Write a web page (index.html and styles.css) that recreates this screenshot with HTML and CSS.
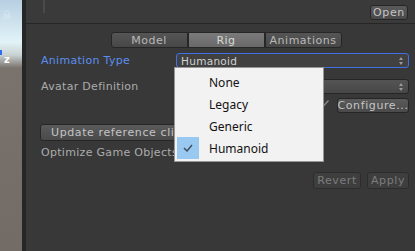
FILE: index.html
```html
<!DOCTYPE html>
<html lang="en">
  <head>
    <meta charset="utf-8">
    <meta name="viewport" content="width=device-width">
    <link rel="stylesheet" href="styles.css">
  </head>
  <body>
    <div class="app">
      <div class="scene">
        <svg class="lock" width="8" height="9" viewBox="0 0 8 9"><path d="M2 4V2.5a2 2 0 0 1 4 0V4" fill="none" stroke="#d6e6f0" stroke-width="1.2"/><rect x="0.5" y="4" width="7" height="5" fill="#d6e6f0"/></svg>
        <span class="gizmo"></span>
        <span class="axis">z</span>
      </div>
      <div class="split"></div>
      <div class="inspector">
        <div class="header">
          <span class="icon"></span>
          <span class="btn open">Open</span>
        </div>
        <div class="content">
          <div class="tabs">
            <span class="tab">Model</span>
            <span class="tab on">Rig</span>
            <span class="tab">Animations</span>
          </div>
          <div class="row first">
            <span class="label focus">Animation Type</span>
            <div class="field focus">Humanoid<span class="arrows"></span></div>
          </div>
          <div class="row">
            <span class="label">Avatar Definition</span>
            <div class="field"><span class="arrows"></span></div>
          </div>
          <div class="row end">
            <svg class="tick" width="8" height="7" viewBox="0 0 8 7"><path d="M0.5 4L2.5 6L7.5 0.5" fill="none" stroke="#8a8a8a" stroke-width="1.3"/></svg>
            <span class="btn configure">Configure...</span>
          </div>
          <span class="btn update">Update reference clips</span>
          <div class="row opt">
            <span class="label">Optimize Game Objects</span>
          </div>
          <div class="row end last">
            <span class="btn off">Revert</span>
            <span class="btn off">Apply</span>
          </div>
        </div>
        <ul class="menu">
          <li>None</li>
          <li>Legacy</li>
          <li>Generic</li>
          <li class="checked"><span class="mark"><svg width="10" height="8" viewBox="0 0 10 8"><path d="M1 4L4 7L9 1" fill="none" stroke="#3f4a57" stroke-width="1.4"/></svg></span>Humanoid</li>
        </ul>
      </div>
    </div>
  </body>
</html>
```

FILE: styles.css
```css
* {margin: 0; padding: 0;}
body {
	background: #383838;
	font: 11px "DejaVu Sans", Verdana, sans-serif;
	color: #acacac;
	overflow: hidden;
}
.app {display: flex; height: 251px;}

/* scene view strip */
.scene {
	width: 22px;
	position: relative;
	background: linear-gradient(#b7cfe2 0px, #e2f3f7 42px, #c9d2d2 55px, #7a736d 68px, #736b66 251px);
}
.lock {position: absolute; left: 3px; top: 10px; opacity: 0.7;}
.gizmo {position: absolute; left: 0; top: 50px; width: 2px; height: 5px; background: #2f6df2;}
.axis {position: absolute; left: 4px; top: 54px; color: #fff; font-weight: bold; font-size: 10px;}
.split {width: 4px; background: #262626;}

.inspector {flex: 1; position: relative; background: #383838;}
.header {
	height: 23px;
	border-bottom: 1px solid #262626;
	background: #3a3a3a;
	display: flex;
	justify-content: flex-end;
	align-items: flex-start;
	padding-right: 7px;
	position: relative;
}
.icon {position: absolute; left: 17px; top: 0; width: 2px; height: 13px; background: #4a4a4a;}

.btn {
	display: inline-flex;
	align-items: center;
	justify-content: center;
	height: 15px;
	border: 1px solid #262626;
	border-radius: 3px;
	background: linear-gradient(#5a5a5a, #4a4a4a);
	color: #c4c4c4;
	letter-spacing: 0.6px;
	box-sizing: border-box;
	white-space: nowrap;
}
.open {margin-top: 5px; width: 38px; height: 15px;}

.content {padding: 8px 6px 0 15px;}
.tabs {display: flex; justify-content: center; margin-left: 2px;}
.tab {
	width: 77px;
	height: 16px;
	box-sizing: border-box;
	display: flex;
	align-items: center;
	justify-content: center;
	border: 1px solid #262626;
	background: linear-gradient(#555, #474747);
	color: #b8b8b8;
	letter-spacing: 0.5px;
}
.tab:first-child {border-radius: 3px 0 0 3px;}
.tab:last-child {border-radius: 0 3px 3px 0;}
.tab.on {background: linear-gradient(#7a7a7a, #696969); color: #d8d8d8;}

.row {display: flex; align-items: center; height: 15px; margin-top: 11px;}
.row.first {margin-top: 5px;}
.label {width: 135px; letter-spacing: 0.3px; white-space: nowrap;}
.label.focus {color: #5c8ef0;}
.field {
	flex: 1;
	height: 15px;
	box-sizing: border-box;
	border: 1px solid #262626;
	border-radius: 3px;
	background: linear-gradient(#545454, #474747);
	color: #d2d2d2;
	padding-left: 4px;
	display: flex;
	align-items: center;
	position: relative;
	font-size: 10.5px;
	letter-spacing: 0.3px;
}
.field.focus {border-color: #3f70e6; background: #414141;}
.arrows {
	position: absolute;
	right: 5px; top: 3px;
	width: 0; height: 0;
	border-left: 2px solid transparent;
	border-right: 2px solid transparent;
	border-bottom: 3px solid #9a9a9a;
}
.arrows::after {
	content: "";
	position: absolute;
	left: -2px; top: 5px;
	border-left: 2px solid transparent;
	border-right: 2px solid transparent;
	border-top: 3px solid #9a9a9a;
}
.row.end {justify-content: flex-end; margin-top: 4px;}
.tick {margin-right: 8px; margin-bottom: 4px;}
.configure {width: 72px; height: 15px;}
.update {margin-top: 11px; width: 170px; height: 17px; justify-content: flex-start; padding-left: 10px; margin-left: -1px;}
.row.opt {margin-top: 4px;}
.row.end.last {margin-top: 12px; gap: 6px; height: 17px;}
.off {color: #7c7c7c; background: #3e3e3e; border-color: #2c2c2c; height: 17px;}
.off:first-child {width: 48px;}
.off:last-child {width: 42px;}

/* popup menu */
.menu {
	position: absolute;
	left: 148px;
	top: 67px;
	width: 150px;
	height: 95px;
	box-sizing: border-box;
	list-style: none;
	background: #f2f2f2;
	border: 1px solid #979797;
	padding-top: 3px;
	font: 12px "Noto Sans", sans-serif;
	color: #111;
}
.menu li {height: 22px; display: flex; align-items: center; padding-left: 34px; position: relative;}
.mark {
	position: absolute;
	left: 2px; top: 0;
	width: 22px; height: 22px;
	background: #99c9f0;
	display: flex; align-items: center; justify-content: center;
}
```
